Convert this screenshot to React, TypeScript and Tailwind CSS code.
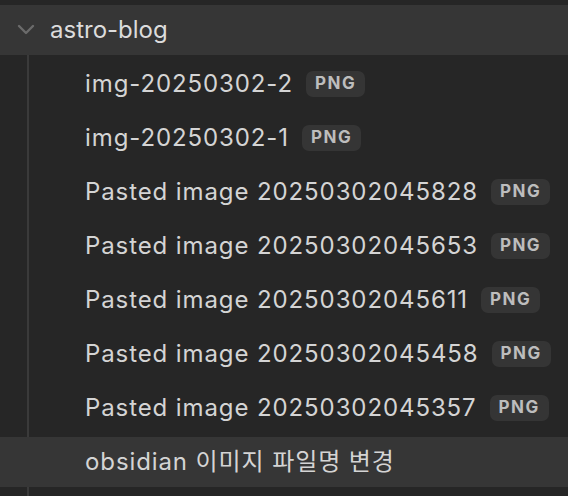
import React from "react";

const files = [
  { name: "img-20250302-2", ext: "PNG" },
  { name: "img-20250302-1", ext: "PNG" },
  { name: "Pasted image 20250302045828", ext: "PNG" },
  { name: "Pasted image 20250302045653", ext: "PNG" },
  { name: "Pasted image 20250302045611", ext: "PNG" },
  { name: "Pasted image 20250302045458", ext: "PNG" },
  { name: "Pasted image 20250302045357", ext: "PNG" },
  { name: "obsidian 이미지 파일명 변경", ext: "", active: true },
];

const App = () => {
  return (
    <div
      className="w-[568px] h-[496px] overflow-hidden bg-[#262626] pt-[5px]"
      style={{ fontFamily: 'Inter, "Noto Sans CJK KR", sans-serif' }}
    >
      {/* Folder header */}
      <div className="h-[50px] bg-[#363636] flex items-center pl-[17px]">
        <svg width="18" height="12" viewBox="0 0 18 12" className="mr-[15px]">
          <path d="M2 2 L9 9 L16 2" fill="none" stroke="#6b6b6b" strokeWidth="2.4" strokeLinecap="round" strokeLinejoin="round" />
        </svg>
        <span className="text-[24px] text-[#dcdcdc]">astro-blog</span>
      </div>

      {/* Children */}
      <div className="flex">
        <div className="w-[27px] shrink-0" />
        <div className="w-[2px] shrink-0 bg-[#3a3a3a] h-[441px]" />
        <div className="flex-1 flex flex-col gap-[4px] pt-[4px]">
          {files.map((f) => (
            <div
              key={f.name}
              className={`h-[50px] flex items-center pl-[85px] -ml-[29px] ${f.active ? "bg-[#363636]" : ""}`}
            >
              <span className="text-[24px] tracking-[0.9px] text-[#d4d4d4] whitespace-nowrap">{f.name}</span>
              {f.ext && (
                <span className="ml-[13px] h-[26px] px-[9px] rounded-[7px] bg-[#353535] text-[#bdbdbd] text-[17px] font-bold tracking-[1.5px] flex items-center">
                  {f.ext}
                </span>
              )}
            </div>
          ))}
        </div>
      </div>
    </div>
  );
};

export default App;
